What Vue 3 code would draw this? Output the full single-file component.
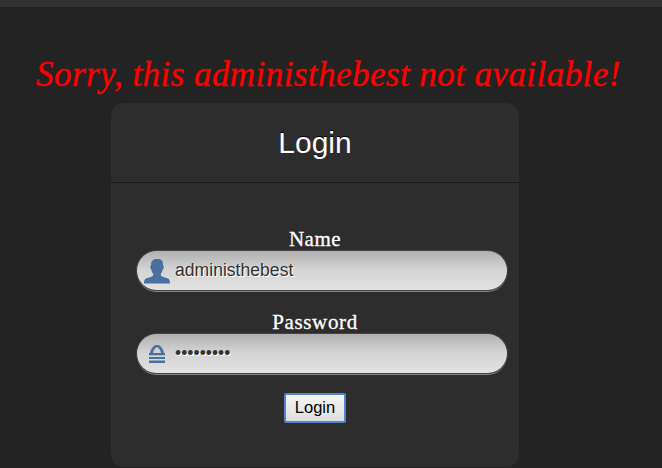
<script setup>
import { ref } from 'vue'

const name = ref('administhebest')
const password = ref('bestadmin')
</script>

<template>
  <main class="page">
    <div class="topbar"></div>
    <h1 class="error"><span>Sorry, this administhebest not available!</span></h1>
    <section class="card">
      <header class="card-header">Login</header>
      <form class="form" @submit.prevent>
        <label class="label name-label" for="name">Name</label>
        <div class="field">
          <svg class="user-icon" viewBox="0 0 26 25" aria-hidden="true">
            <path d="M11 0H15.5C18.5 1 19.2 3 19 6.5C20.2 7 20 10 18.7 10.5C18.3 12.8 17.6 14 16.8 14.8V16.5C18 18 21.5 18.4 24 19.6C25.5 20.5 26 22 26 24.5H0C0 22 .5 20.5 2 19.6C4.500 18.4 8 18 9.200 16.500V14.800C8.400 14 7.700 12.800 7.300 10.500C6 10 5.800 7 7 6.500C6.800 3 8 1 11 0Z" />
          </svg>
          <input id="name" v-model="name" type="text" autocomplete="off" />
        </div>
        <label class="label pass-label" for="password">Password</label>
        <div class="field">
          <svg class="lock-icon" viewBox="0 0 16 18" aria-hidden="true">
            <path d="M0 8H1C1.500 4.800 3.500 1.500 6 0H10C12.500 1.500 14.500 4.800 15 8H16V10.300H0ZM4 8H12C11.500 5.500 10.300 3.500 9 2.500H7C5.700 3.500 4.500 5.500 4 8ZM0 11.900H16V14.100H0ZM0 15.600H16V18H0Z" />
          </svg>
          <input id="password" v-model="password" type="password" autocomplete="off" />
        </div>
        <button class="submit" type="submit">Login</button>
      </form>
    </section>
  </main>
</template>

<style>
body {
  margin: 0;
  background: #232323;
}
</style>

<style scoped>
.page {
  height: 468px;
  overflow: hidden;
  background: #232323;
}

.topbar {
  height: 7px;
  background: #333;
}

.error {
  display: flex;
  height: 96px;
  margin: 0;
  padding: 48px 0 0 36px;
  box-sizing: border-box;
  color: #f00;
  font: italic 400 35px/40px Georgia, "Liberation Serif", serif;
  letter-spacing: 0.44px;
  white-space: nowrap;
  -webkit-text-stroke: 0.4px #f00;
}

.card {
  width: 408px;
  height: 364px;
  margin-left: 111px;
  border-radius: 13px;
  background: #2d2d2d;
}

.card-header {
  height: 79px;
  border-bottom: 1px solid #191919;
  color: #fff;
  font: 30px/79px "Liberation Sans", Arial, sans-serif;
  text-align: center;
  text-shadow: 0 -1px 0 #000;
}

.form {
  display: flex;
  flex-direction: column;
  align-items: center;
  padding-top: 44px;
}

.label {
  height: 24px;
  color: #fff;
  font: 21px/24px Georgia, "Liberation Serif", serif;
  -webkit-text-stroke: 0.3px #fff;
}

.name-label {
  letter-spacing: 0.5px;
}

.pass-label {
  margin-top: 20px;
  letter-spacing: 0.65px;
}

.field {
  display: grid;
  grid-template-columns: 38px 1fr;
  align-items: center;
  align-self: flex-start;
  width: 370px;
  height: 39px;
  margin-left: 26px;
  border-radius: 20px;
  background: linear-gradient(#b0b0b0, #d4d4d4 48%, #e2e2e2);
  box-shadow: 0 0 0 1px #454545, 0 2px 0 #858585;
}

.user-icon,
.lock-icon {
  display: block;
  fill: #4a70a2;
}

.user-icon {
  width: 26px;
  height: 25px;
  margin: 2px 0 0 7px;
}

.lock-icon {
  width: 16px;
  height: 18px;
  margin: 1px 0 0 12px;
}

input {
  width: 300px;
  height: 38px;
  padding: 0;
  border: 0;
  outline: 0;
  background: transparent;
  color: #333;
  font: 17.6px "Liberation Sans", Arial, sans-serif;
  text-shadow: 1px 1px 0 #fff;
}

.submit {
  width: 62px;
  height: 30px;
  margin-top: 20px;
  padding: 0 0 1px;
  border: 2px solid #5583cf;
  border-radius: 2px;
  background: linear-gradient(#f6f6f6, #ddd);
  color: #000;
  font: 16.5px "Liberation Sans", Arial, sans-serif;
}
</style>
